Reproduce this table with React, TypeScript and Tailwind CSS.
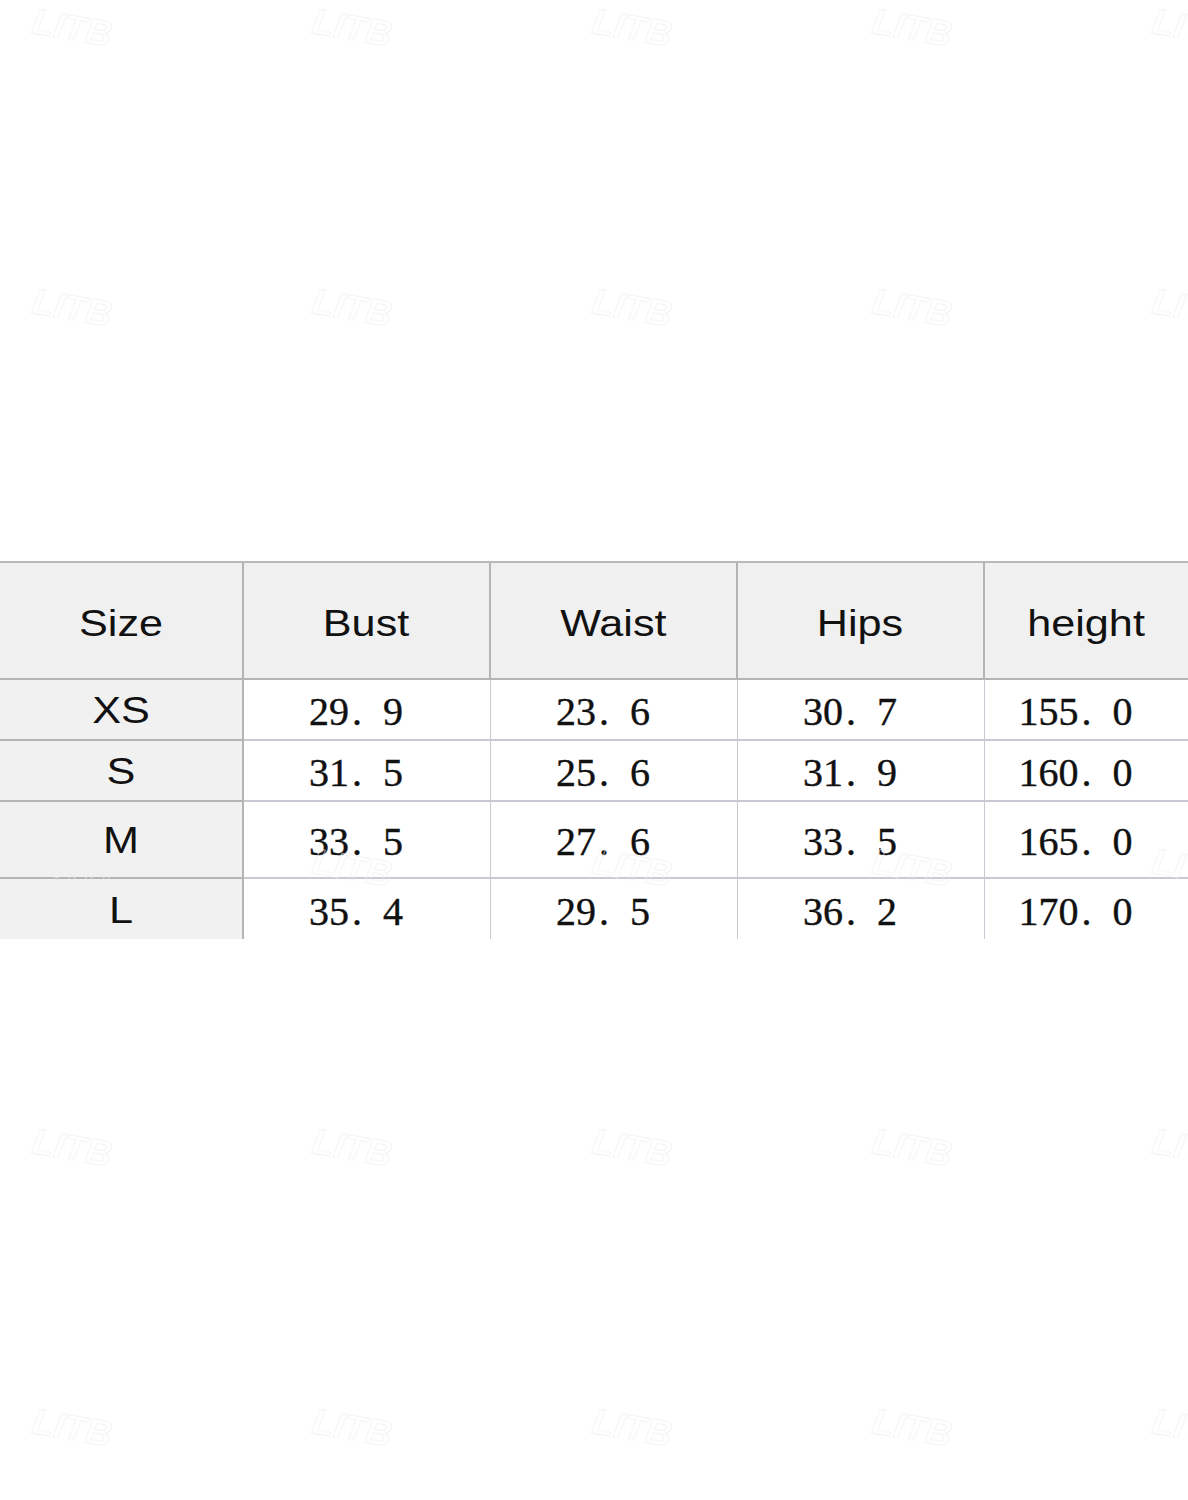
const headers = ["Size", "Bust", "Waist", "Hips", "height"];

const rows = [
  { size: "XS", values: ["29.9", "23.6", "30.7", "155.0"], h: "h-[61px]" },
  { size: "S", values: ["31.5", "25.6", "31.9", "160.0"], h: "h-[61px]" },
  { size: "M", values: ["33.5", "27.6", "33.5", "165.0"], h: "h-[77px]" },
  { size: "L", values: ["35.4", "29.5", "36.2", "170.0"], h: "h-[60px]" },
];

const marksX = ["left-[32px]", "left-[312px]", "left-[592px]", "left-[872px]", "left-[1152px]"];
const marksY = ["top-[10px]", "top-[290px]", "top-[570px]", "top-[850px]", "top-[1130px]", "top-[1410px]"];

function Num({ value }: { value: string }) {
  const [a, b] = value.split(".");
  return (
    <span className="font-['Liberation_Serif',serif] text-[40px] leading-none text-[#111] [-webkit-text-stroke:0.4px_#111]">
      {a}
      <span className="inline-block w-[34px] pl-[3px]">.</span>
      {b}
    </span>
  );
}

function Label({ text }: { text: string }) {
  return (
    <span className="inline-block scale-x-[1.2] font-['Liberation_Sans',Arial,sans-serif] text-[36px] leading-none text-[#111]">
      {text}
    </span>
  );
}

export default function App() {
  return (
    <div className="relative h-[1500px] w-[1188px] overflow-hidden bg-white flex items-center">
      <div className="w-full">
        <div className="grid grid-cols-[244px_247px_247px_247px_1fr] border-t-2 border-[#b9b9b9]">
          {headers.map((h, i) => (
            <div
              key={h}
              className={`h-[117px] bg-[#f0f0f0] border-b-2 border-[#b4b4b4] flex items-center justify-center pt-[6px] ${i < 4 ? "border-r-2" : ""}`}
            >
              <Label text={h} />
            </div>
          ))}
          {rows.map((r, ri) => (
            <div key={r.size} className="contents">
              <div
                className={`${r.h} bg-[#f1f1f1] border-r-2 border-[#b4b4b4] flex items-center justify-center pt-[3px] ${ri < 3 ? "border-b-2" : ""}`}
              >
                <Label text={r.size} />
              </div>
              {r.values.map((v, vi) => (
                <div
                  key={vi}
                  className={`${r.h} flex items-center justify-center pt-[5px] pr-[22px] border-[#c9c9d4] ${vi < 3 ? "border-r" : ""} ${ri < 3 ? "border-b-2" : ""}`}
                >
                  <Num value={v} />
                </div>
              ))}
            </div>
          ))}
        </div>
      </div>

      {marksY.map((y) =>
        marksX.map((x) => (
          <div
            key={x + y}
            className={`pointer-events-none absolute ${x} ${y} rotate-[10deg] font-['Liberation_Sans',sans-serif] text-[36px] font-bold italic leading-none text-transparent [-webkit-text-stroke:1px_#f0f0f3] opacity-60`}
          >
            LITB
          </div>
        ))
      )}
    </div>
  );
}
